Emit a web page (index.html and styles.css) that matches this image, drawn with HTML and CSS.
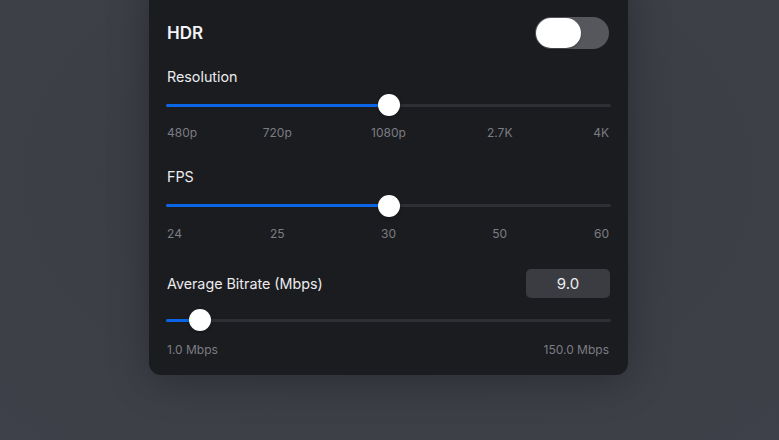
FILE: index.html
```html
<!DOCTYPE html>
<html lang="en">
<head>
<meta charset="utf-8">
<title>Video Settings</title>
<link rel="stylesheet" href="styles.css">
</head>
<body>
<div class="panel">
  <div class="hdr-row">
    <span class="hdr-title">HDR</span>
    <div class="toggle"><span class="toggle-knob"></span></div>
  </div>

  <section class="setting setting-res">
    <div class="label">Resolution</div>
    <div class="slider" style="--v:0.5">
      <div class="track"><div class="fill"></div></div>
      <div class="thumb"></div>
    </div>
    <div class="ticks">
      <span class="t t1">480p</span>
      <span class="t t2">720p</span>
      <span class="t t3">1080p</span>
      <span class="t t4">2.7K</span>
      <span class="t t5">4K</span>
    </div>
  </section>

  <section class="setting setting-fps">
    <div class="label">FPS</div>
    <div class="slider" style="--v:0.5">
      <div class="track"><div class="fill"></div></div>
      <div class="thumb"></div>
    </div>
    <div class="ticks">
      <span class="t t1">24</span>
      <span class="t t2">25</span>
      <span class="t t3">30</span>
      <span class="t t4">50</span>
      <span class="t t5">60</span>
    </div>
  </section>

  <section class="setting setting-bitrate">
    <div class="bitrate-row">
      <div class="label">Average Bitrate (Mbps)</div>
      <div class="value">9.0</div>
    </div>
    <div class="slider slider-bitrate" style="--v:0.0537">
      <div class="track"><div class="fill"></div></div>
      <div class="thumb"></div>
    </div>
    <div class="range-ends">
      <span class="t">1.0 Mbps</span>
      <span class="t">150.0 Mbps</span>
    </div>
  </section>
</div>
</body>
</html>
```
FILE: styles.css
```css
* { box-sizing: border-box; }

html, body {
  margin: 0;
  height: 100%;
  overflow: hidden;
}

body {
  padding-right: 2px;
  background: radial-gradient(ellipse at 50% 40%, #34373d 0%, #3b3e45 45%, #3e4149 100%);
  font-family: Inter, "Noto Sans", "Liberation Sans", sans-serif;
  color: #e8e8ea;
}

.panel {
  width: 479px;
  margin: -24px auto 0;
  padding: 41px 17px 17.5px;
  background: #1b1c20;
  border-radius: 12px;
  box-shadow: 0 6px 40px rgba(0, 0, 0, 0.28);
}

.hdr-row {
  height: 32px;
  display: flex;
  align-items: center;
  justify-content: space-between;
}

.hdr-title {
  font-size: 17px;
  font-weight: 600;
  color: #f3f3f5;
  padding-left: 1px;
}

.toggle {
  width: 74px;
  height: 32px;
  margin-right: 2px;
  padding: 1px;
  border-radius: 16px;
  background: #56575d;
  display: flex;
}

.toggle-knob {
  width: 45px;
  height: 30px;
  border-radius: 15px;
  background: #ffffff;
  box-shadow: 0 1px 2px rgba(0, 0, 0, 0.3);
}

.setting-res { margin-top: 17.5px; }
.setting-fps { margin-top: 26px; }
.setting-bitrate { margin-top: 27.5px; }

.label {
  font-size: 14.3px;
  line-height: 20px;
  color: #ebebed;
  padding-left: 1px;
}

.slider {
  position: relative;
  height: 22px;
  margin-top: 7.5px;
  display: flex;
  align-items: center;
}

.slider-bitrate { margin-top: 11px; }

.track {
  width: 100%;
  height: 3px;
  border-radius: 2px;
  background: #2e2f34;
  overflow: hidden;
}

.fill {
  height: 100%;
  width: calc(11px + (100% - 22px) * var(--v));
  background: #0a66e6;
}

.thumb {
  position: absolute;
  top: 0;
  left: calc((100% - 22px) * var(--v));
  width: 22px;
  height: 22px;
  border-radius: 50%;
  background: #ffffff;
  box-shadow: 0 1px 3px rgba(0, 0, 0, 0.35);
}

.ticks {
  margin-top: 9px;
  display: grid;
  grid-template-columns: repeat(8, 1fr);
}

.t {
  font-size: 12px;
  line-height: 16px;
  color: #7c7d83;
  white-space: nowrap;
}

.t1 { grid-column: 1 / 2; justify-self: start; padding-left: 1px; }
.t2 { grid-column: 2 / 4; justify-self: center; }
.t3 { grid-column: 4 / 6; justify-self: center; }
.t4 { grid-column: 6 / 8; justify-self: center; }
.t5 { grid-column: 8 / 9; justify-self: end; padding-right: 2px; }

.bitrate-row {
  height: 29px;
  display: flex;
  align-items: center;
  justify-content: space-between;
}

.value {
  width: 84px;
  height: 29px;
  margin-right: 1px;
  border-radius: 5px;
  background: #3a3c42;
  display: flex;
  align-items: center;
  justify-content: center;
  font-size: 15px;
  color: #ececee;
}

.range-ends {
  margin-top: 10.5px;
  display: flex;
  justify-content: space-between;
  padding: 0 2px 0 1px;
}
```
